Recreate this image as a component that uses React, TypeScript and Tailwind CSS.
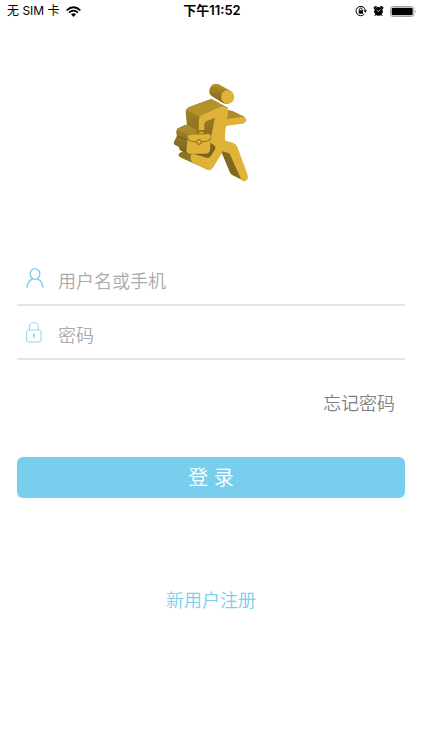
import { useState } from 'react';

function WifiIcon() {
    return (
        <svg viewBox="0 0 45 33" className="w-[15px] h-[11px]" aria-hidden="true">
            <g fill="none" stroke="#000" strokeWidth="5.500">
                <path d="M2 13 Q22.500 -6 43 13" />
                <path d="M9 20 Q22.500 8 36 20" />
            </g>
            <path d="M15 25 Q22.500 18 30 25 L22.500 33 Z" fill="#000" />
        </svg>
    );
}

function RotationLockIcon() {
    return (
        <svg viewBox="0 0 36 36" className="size-3" aria-hidden="true">
            <path d="M28 27 A14 14 0 1 1 31 16" fill="none" stroke="#000" strokeWidth="3" />
            <path d="M25 16 H36 L31 23 Z" fill="#000" />
            <rect x="11" y="16" width="13" height="10" rx="1" fill="#000" />
            <path d="M13.500 17 V13 A4 4 0 0 1 21.500 13 V17" fill="none" stroke="#000" strokeWidth="2.500" />
        </svg>
    );
}

function AlarmIcon() {
    return (
        <svg viewBox="0 0 33 36" className="w-[11px] h-3" aria-hidden="true">
            <circle cx="16.500" cy="19" r="13" fill="#000" />
            <path d="M4 9 L9 5 M29 9 L24 5" stroke="#000" strokeWidth="5" strokeLinecap="round" />
            <path d="M8 29 L6 32 M25 29 L27 32" stroke="#000" strokeWidth="3" strokeLinecap="round" />
            <path d="M11 15 L16.500 20 L22 14" fill="none" stroke="#fff" strokeWidth="2" />
        </svg>
    );
}

function BatteryIcon() {
    return (
        <svg viewBox="0 0 81 33" className="w-[27px] h-[11px]" aria-hidden="true">
            <rect x="1.500" y="1.500" width="70" height="30" rx="7" fill="none" stroke="#a3a3a3" strokeWidth="3" />
            <rect x="5" y="5" width="63" height="23" rx="4" fill="#000" />
            <path d="M75 11 Q80 16.500 75 22 Z" fill="#a3a3a3" />
        </svg>
    );
}

function StatusBar() {
    return (
        <header className="grid grid-cols-3 items-center h-[22px] pl-[7px] pr-[5px] text-xs text-black">
            <div className="flex items-center gap-[6px]">
                <span>无 SIM 卡</span>
                <WifiIcon />
            </div>
            <div className="text-center text-[13px] font-semibold">下午11:52</div>
            <div className="flex items-center justify-end gap-[6px]">
                <RotationLockIcon />
                <AlarmIcon />
                <BatteryIcon />
            </div>
        </header>
    );
}

function Logo() {
    return (
        <svg viewBox="-6 0 288 345" className="w-24 h-[115px]" role="img" aria-label="Logo">
            <defs>
                <linearGradient id="side" x1="0" y1="0" x2="0" y2="1">
                    <stop offset="0" stopColor="#a88728" />
                    <stop offset="1" stopColor="#75601c" />
                </linearGradient>
                <linearGradient id="head" x1="0.600" y1="0" x2="0.300" y2="1">
                    <stop offset="0" stopColor="#bd982b" />
                    <stop offset="1" stopColor="#725d1b" />
                </linearGradient>
            </defs>

            {/* Head */}
            <path d="M161 28 L196 47 Q204 52 204 65 Q202 84 188 86 Q181 87 174 84 L141 64 Q132 59 133 46 Q137 27 153 26 Q157 26 161 28 Z" fill="url(#head)" />
            <circle cx="188" cy="66" r="20" fill="#dfb338" />

            {/* Back of the body */}
            <path d="M62 111 Q63 101 71 97 L132 74 Q138 71 145 75 L188 98 L180 150 L178 215 L130 250 L70 200 Z" fill="url(#side)" />
            <path d="M64 105 Q67 98 73 96 L132 74 Q138 71 145 75 L188 98 L170 98 L112 120 L105 127 Z" fill="#b5912b" />

            {/* Far arm */}
            <path d="M186 104 L201 107 L240 126 L230 132 L184 136 Z" fill="#ae8b29" />
            <path d="M182 133 L227 126 Q241 124 244 133 Q245 143 232 146 L180 153 Z" fill="#dfb338" />

            {/* Far leg */}
            <path d="M170 207 L192 205 L236 317 L200 299 Q195 295 192 286 L170 233 Z" fill="#806920" />

            {/* Back leg */}
            <path d="M40 240 Q42 232 50 231 L75 218 L137 222 L160 240 L136 283 L132 286 L50 249 Q42 246 40 240 Z" fill="#8f7424" />
            <path d="M130 205 L152 215 L150 232 L137 248 L90 238 L110 220 Z" fill="#79631e" />

            {/* Torso, near arm and legs */}
            <path d="M101 174 L102 133 Q103 123 112 119 L164 97 Q173 93 181 96 Q190 101 189 112 L180 174 Q179 190 182 197 L203 203 Q213 206 217 215 L248 301 Q251 314 240 319 Q231 320 227 310 L194 236 L174 229 L144 278 Q137 287 126 284 L84 263 Q75 257 77 243 Q79 235 88 238 L126 249 Q133 250 137 244 L151 221 Q153 214 147 210 L136 203 L138 187 L150 128 L124 139 Q119 141 118 147 L117 177 Z" fill="#dfb338" />

            {/* Briefcase */}
            <path d="M34 168 Q36 159 46 157 L60 150 Q66 149 72 152 L100 168 L105 177 L86 195 L68 238 L44 225 L42 216 L30 210 Q25 207 27 200 L36 182 Q32 176 34 168 Z" fill="url(#side)" />
            <path d="M35 165 Q38 159 46 157 L60 150 Q66 149 72 152 L100 168 L102 176 L72 179 Z" fill="#ab8a29" />
            <path d="M36 182 L66 196" stroke="#6f5a1a" strokeWidth="3" />
            <path d="M69 183 Q70 178 76 178 L128 177 Q139 177 138 186 L135 225 Q134 235 124 236 L75 236 Q63 235 64 224 Z" fill="#dfb338" />
            <path d="M98 178 V172 Q98 168 102 168 H114 Q118 168 117 173 V178" fill="none" stroke="#806719" strokeWidth="4" />
            <path d="M68 188 Q69 198 80 199 L94 201 M109 201 L127 198 Q137 195 137 187" fill="none" stroke="#8b701f" strokeWidth="3" />
            <circle cx="102" cy="201" r="7" fill="#dfb338" stroke="#806719" strokeWidth="3" />
            <path d="M71 179 L87 177 L127 177" fill="none" stroke="#9b7d24" strokeWidth="2" />
        </svg>
    );
}

function UserIcon() {
    return (
        <svg viewBox="0 0 54 63" className="w-[18px] h-[21px]" fill="none" stroke="#79cdec" strokeWidth="4" aria-hidden="true">
            <ellipse cx="27" cy="18" rx="14.500" ry="16" />
            <path d="M3 59 Q5 38 20 33 M34 33 Q49 38 51 59" />
        </svg>
    );
}

function LockIcon() {
    return (
        <svg viewBox="0 0 54 63" className="w-[18px] h-[21px]" fill="none" stroke="#8fd5ef" strokeWidth="3" aria-hidden="true">
            <rect x="2" y="24" width="43" height="36" rx="6" />
            <path d="M10 24 V15 Q10 2 23.500 2 Q37 2 37 15 V24" />
            <circle cx="23.500" cy="38" r="2" fill="#5fbfe5" />
            <path d="M23.500 38 V48" stroke="#5fbfe5" />
        </svg>
    );
}

const inputStyle =
    'flex-1 min-w-0 pt-2 text-lg font-[350] text-gray-700 placeholder:text-[#a9a9a9] bg-transparent outline-none';

export default function App() {
    const [username, setUsername] = useState('');
    const [password, setPassword] = useState('');

    return (
        <div className="min-h-screen bg-white font-['Inter','Noto_Sans_CJK_SC',sans-serif]">
            <StatusBar />

            <main className="px-[17px]">
                <div className="flex justify-center pt-[53px]">
                    <Logo />
                </div>

                <form className="pt-[62px]" onSubmit={(e) => e.preventDefault()}>
                    {/* Username */}
                    <div className="flex items-center gap-[14px] h-[54px] pl-[9px] border-b-2 border-[#e4e4e4]">
                        <label htmlFor="username" aria-label="用户名或手机">
                            <UserIcon />
                        </label>
                        <input
                            id="username"
                            type="text"
                            placeholder="用户名或手机"
                            className={inputStyle}
                            value={username}
                            onChange={(e) => setUsername(e.target.value)}
                        />
                    </div>

                    {/* Password */}
                    <div className="flex items-center gap-[14px] h-[54px] pl-[9px] border-b-2 border-[#e4e4e4]">
                        <label htmlFor="password" aria-label="密码">
                            <LockIcon />
                        </label>
                        <input
                            id="password"
                            type="password"
                            placeholder="密码"
                            className={inputStyle}
                            value={password}
                            onChange={(e) => setPassword(e.target.value)}
                        />
                    </div>

                    <div className="flex justify-end pt-[30px] pr-[10px]">
                        <a href="#forgot" className="text-lg font-[350] text-[#7f7f7f]">
                            忘记密码
                        </a>
                    </div>

                    <button
                        type="submit"
                        className="w-full h-[41px] mt-[39px] rounded-md bg-[#78ceed] text-xl font-[350] text-white"
                    >
                        登 录
                    </button>
                </form>

                <div className="flex justify-center pt-[89px]">
                    <a href="#register" className="text-lg font-[350] text-[#78ceed]">
                        新用户注册
                    </a>
                </div>
            </main>
        </div>
    );
}
